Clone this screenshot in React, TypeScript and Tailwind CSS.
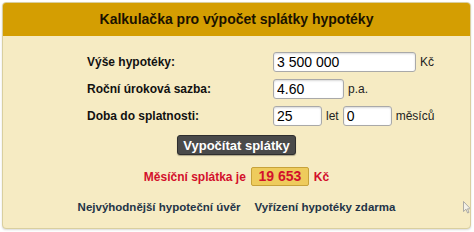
import React from 'react';

const font = { fontFamily: '"Liberation Sans", Arial, sans-serif' };

const Field: React.FC<{ value: string; width: string }> = ({ value, width }) => (
  <input
    readOnly
    value={value}
    className={`${width} h-[20px] rounded-[3px] border border-[#a9a9a9] bg-white px-[3px] text-[14px] leading-none text-black shadow-[inset_0_1px_2px_rgba(0,0,0,0.15)] outline-none`}
    style={font}
  />
);

const Row: React.FC<{ label: string; children: React.ReactNode }> = ({ label, children }) => (
  <div className="flex h-[20px] items-center">
    <div className="w-[186px] text-[12px] font-bold text-[#111]">{label}</div>
    <div className="flex items-center gap-[4px] text-[12px] text-[#222]">{children}</div>
  </div>
);

export default function App() {
  return (
    <div className="h-[232px] w-[474px] bg-white p-[2px]" style={font}>
      <div className="relative flex h-[227px] w-[469px] flex-col overflow-hidden rounded-[4px] border border-[#d9cf9f] bg-[#f6ebc3] shadow-[0_1px_2px_rgba(0,0,0,0.15)]">
        {/* Header */}
        <div className="flex h-[33px] items-center justify-center bg-[#d49e02] text-[14px] font-bold text-[#1b1200]">
          Kalkulačka pro výpočet splátky hypotéky
        </div>

        {/* Form */}
        <div className="flex flex-col gap-[7px] pl-[84px] pt-[16px]">
          <Row label="Výše hypotéky:">
            <Field value="3 500 000" width="w-[143px]" />
            <span>Kč</span>
          </Row>
          <Row label="Roční úroková sazba:">
            <Field value="4.60" width="w-[71px]" />
            <span>p.a.</span>
          </Row>
          <Row label="Doba do splatnosti:">
            <Field value="25" width="w-[49px]" />
            <span>let</span>
            <Field value="0" width="w-[49px]" />
            <span>měsíců</span>
          </Row>
        </div>

        <div className="mt-[9px] flex justify-center">
          <button className="h-[20px] w-[119px] rounded-[3px] border border-[#2e2e2e] bg-[#4a4a4a] text-[13px] font-bold leading-none text-white shadow-[0_1px_1px_rgba(0,0,0,0.3)]">
            Vypočítat splátky
          </button>
        </div>

        {/* Result */}
        <div className="mt-[12px] flex items-center justify-center gap-[5px] text-[12px] font-bold text-[#d3102c]">
          <span>Měsíční splátka je</span>
          <span className="flex h-[19px] w-[58px] items-center justify-center rounded-[2px] border border-[#c7a23a] bg-[#eecb5c] text-[14px]">
            19 653
          </span>
          <span>Kč</span>
        </div>

        {/* Links */}
        <div className="mt-[13px] flex justify-center gap-[14px] text-[11.5px] font-bold text-[#243447]">
          <span>Nejvýhodnější hypoteční úvěr</span>
          <span>Vyřízení hypotéky zdarma</span>
        </div>

        {/* mouse pointer */}
        <svg className="absolute left-[460px] top-[198px]" width="8" height="13" viewBox="0 0 8 13">
          <path d="M0.5 0.5 L0.5 10.5 L3 8.2 L4.6 12 L6 11.4 L4.5 7.8 L7.5 7.8 Z" fill="#f4f1e6" stroke="#9a9a9a" strokeWidth="0.8" />
        </svg>
      </div>
    </div>
  );
}
